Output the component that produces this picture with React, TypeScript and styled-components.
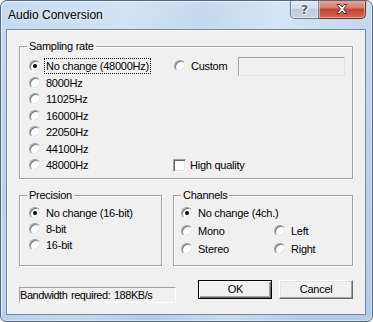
import React from "react";
import styled, { createGlobalStyle } from "styled-components";

const Global = createGlobalStyle`
  html, body { margin: 0; padding: 0; background: #ffffff; }
  body { font-family: "Liberation Sans", Arial, sans-serif; }
  * { box-sizing: border-box; }
`;

const Window = styled.div`
  width: 373px;
  height: 322px;
  border: 1px solid #55687f;
  border-radius: 7px 7px 6px 6px;
  padding: 0 6px 6px 5px;
  display: flex;
  flex-direction: column;
  background:
    linear-gradient(100deg, rgba(255,255,255,0) 0%, rgba(255,255,255,0.25) 30%, rgba(255,255,255,0) 48%, rgba(255,255,255,0.3) 66%, rgba(255,255,255,0) 85%),
    linear-gradient(180deg, #c6daf0 0%, #bcd3ec 40%, #b2cbe8 100%);
  box-shadow: inset 1px 1px 0 rgba(255,255,255,0.6), inset -1px -1px 0 rgba(255,255,255,0.4);
  overflow: hidden;
`;

const TitleBar = styled.div`
  height: 28px;
  display: flex;
  align-items: flex-start;
  justify-content: space-between;
`;

const Title = styled.div`
  height: 28px;
  line-height: 28px;
  padding-left: 2px;
  font-size: 12px;
  color: #000;
  text-shadow: 0 0 6px rgba(255,255,255,0.9);
`;

const Caps = styled.div`
  display: flex;
  margin-top: -1px;
`;

const CapButton = styled.div<{ $kind: "help" | "close" }>`
  height: 19px;
  width: ${(p) => (p.$kind === "help" ? "29px" : "47px")};
  display: flex;
  align-items: center;
  justify-content: center;
  border: 1px solid ${(p) => (p.$kind === "help" ? "#6a7b90" : "#6b2d25")};
  border-left-width: ${(p) => (p.$kind === "help" ? "1px" : "0")};
  border-top: none;
  border-radius: ${(p) => (p.$kind === "help" ? "0 0 0 5px" : "0 0 5px 0")};
  background: ${(p) =>
    p.$kind === "help"
      ? "linear-gradient(180deg, #e4ecf5 0%, #d4dfec 45%, #bccbdc 50%, #c7d5e6 100%)"
      : "linear-gradient(180deg, #e8a99c 0%, #d67b6a 45%, #c4422f 50%, #d16650 100%)"};
  box-shadow: inset 0 0 0 1px rgba(255,255,255,0.45);
`;

const HelpGlyph = styled.span`
  font: bold 13px "DejaVu Sans", sans-serif;
  color: #5a6472;
  text-shadow: 0 0 1px #fff, 0 0 2px #fff, 1px 1px 0 #fff;
  line-height: 1;
`;

const Client = styled.div`
  flex: 1;
  border: 1px solid #6f87a6;
  background: #f0f0f0;
  box-shadow: inset 1px 1px 0 #fbfbfb;
  padding: 16px 12px 0 12px;
  display: flex;
  flex-direction: column;
  font-size: 11px;
  letter-spacing: -0.25px;
  color: #000;
`;

const Group = styled.div<{ $w?: number; $h: number; $mt?: number }>`
  position: relative;
  width: ${(p) => (p.$w ? `${p.$w}px` : "auto")};
  height: ${(p) => p.$h}px;
  margin-top: ${(p) => p.$mt ?? 0}px;
  border: 1px solid #a0a0a0;
  box-shadow: inset 1px 1px 0 #fff, 1px 1px 0 #fff;
`;

const Caption = styled.span`
  position: absolute;
  top: -8px;
  left: 7px;
  padding: 0 2px;
  background: #f0f0f0;
  line-height: 14px;
`;

const SampleGrid = styled.div`
  display: grid;
  grid-template-columns: 145px 1fr;
  grid-auto-rows: 16.5px;
  padding: 11px 0 0 9px;
`;

const Cell = styled.div<{ $col?: number; $row?: number; $span?: number }>`
  grid-column: ${(p) => (p.$col ? `${p.$col} / span ${p.$span ?? 1}` : "auto")};
  grid-row: ${(p) => (p.$row ? p.$row : "auto")};
  display: flex;
  align-items: center;
  white-space: nowrap;
`;

const RowsGrid = styled.div<{ $rowH: number; $pt: number; $pl: number; $cols?: string }>`
  display: grid;
  grid-template-columns: ${(p) => p.$cols ?? "1fr"};
  grid-auto-rows: ${(p) => p.$rowH}px;
  padding: ${(p) => p.$pt}px 0 0 ${(p) => p.$pl}px;
`;

const RadioDot = styled.span<{ $on?: boolean }>`
  position: relative;
  flex: none;
  width: 12px;
  height: 12px;
  margin-right: 5px;
  border-radius: 50%;
  background: #fff;
  border: 1px solid;
  border-color: #a0a0a0 #f4f4f4 #f4f4f4 #a0a0a0;
  box-shadow: inset 1px 1px 0 #777, inset -1px -1px 0 #e3e3e3;
  &::after {
    content: "";
    display: ${(p) => (p.$on ? "block" : "none")};
    position: absolute;
    left: 3px;
    top: 3px;
    width: 4px;
    height: 4px;
    border-radius: 50%;
    background: #000;
  }
`;

const CheckBox = styled.span`
  flex: none;
  width: 13px;
  height: 13px;
  margin: 0 4px 0 -1px;
  background: #fff;
  border: 1px solid;
  border-color: #a0a0a0 #fff #fff #a0a0a0;
  box-shadow: inset 1px 1px 0 #696969, inset -1px -1px 0 #e3e3e3;
`;

const Label = styled.span<{ $focus?: boolean }>`
  line-height: 14px;
  padding: 0 1px;
  margin-left: -1px;
  outline: ${(p) => (p.$focus ? "1px dotted #000" : "none")};
  outline-offset: 0;
`;

const Edit = styled.span`
  width: 107px;
  height: 19px;
  margin-left: auto;
  margin-right: 7px;
  margin-top: 1px;
  background: #f0f0f0;
  border: 1px solid;
  border-color: #a0a0a0 #e3e3e3 #e3e3e3 #a0a0a0;
  box-shadow: inset 1px 1px 0 #f8f8f8;
`;

const Pair = styled.div`
  display: flex;
  gap: 11px;
  margin-top: 16px;
`;

const Footer = styled.div`
  display: flex;
  align-items: flex-start;
  margin-top: 14px;
`;

const Status = styled.div`
  width: 158px;
  height: 16px;
  margin-top: 7px;
  border: 1px solid;
  border-color: #a0a0a0 #fff #fff #a0a0a0;
  line-height: 14px;
  padding-left: 0;
  letter-spacing: -0.45px;
  word-spacing: 1px;
  white-space: nowrap;
`;

const Button = styled.div<{ $default?: boolean }>`
  width: 74px;
  height: 19px;
  display: flex;
  align-items: center;
  justify-content: center;
  margin-left: ${(p) => (p.$default ? "22px" : "7px")};
  background: #f0f0f0;
  border: 1px solid;
  border-color: ${(p) => (p.$default ? "#000" : "#fff #696969 #696969 #fff")};
  box-shadow: ${(p) =>
    p.$default
      ? "inset 1px 1px 0 #fff, inset -1px -1px 0 #696969, inset -2px -2px 0 #a0a0a0"
      : "inset -1px -1px 0 #a0a0a0, inset 1px 1px 0 #e3e3e3"};
  padding-bottom: 1px;
`;

const Radio = ({ label, on, focus }: { label: string; on?: boolean; focus?: boolean }) => (
  <>
    <RadioDot $on={on} />
    <Label $focus={focus}>{label}</Label>
  </>
);

const rates = ["8000Hz", "11025Hz", "16000Hz", "22050Hz", "44100Hz", "48000Hz"];

export default function App() {
  return (
    <>
      <Global />
      <Window>
        <TitleBar>
          <Title>Audio Conversion</Title>
          <Caps>
            <CapButton $kind="help">
              <HelpGlyph>?</HelpGlyph>
            </CapButton>
            <CapButton $kind="close">
              <svg width="16" height="12" viewBox="0 0 16 12">
                <path
                  d="M3 1.5 L6 1.5 L8 4 L10 1.5 L13 1.5 L9.6 6 L13 10.5 L10 10.5 L8 8 L6 10.5 L3 10.5 L6.4 6 Z"
                  fill="#fff"
                  stroke="#5a1f18"
                  strokeWidth="0.9"
                  strokeLinejoin="round"
                />
              </svg>
            </CapButton>
          </Caps>
        </TitleBar>
        <Client>
          <Group $h={133}>
            <Caption>Sampling rate</Caption>
            <SampleGrid>
              <Cell $col={1} $row={1}>
                <Radio label="No change (48000Hz)" on focus />
              </Cell>
              {rates.map((r, i) => (
                <Cell key={r} $col={1} $row={i + 2}>
                  <Radio label={r} />
                </Cell>
              ))}
              <Cell $col={2} $row={1}>
                <Radio label="Custom" />
                <Edit />
              </Cell>
              <Cell $col={2} $row={7}>
                <CheckBox />
                <Label>High quality</Label>
              </Cell>
            </SampleGrid>
          </Group>
          <Pair>
            <Group $w={143} $h={71}>
              <Caption>Precision</Caption>
              <RowsGrid $rowH={16} $pt={9} $pl={9}>
                <Cell>
                  <Radio label="No change (16-bit)" on />
                </Cell>
                <Cell>
                  <Radio label="8-bit" />
                </Cell>
                <Cell>
                  <Radio label="16-bit" />
                </Cell>
              </RowsGrid>
            </Group>
            <Group $w={180} $h={71}>
              <Caption>Channels</Caption>
              <RowsGrid $rowH={18} $pt={8} $pl={7} $cols="93px 1fr">
                <Cell $col={1} $span={2}>
                  <Radio label="No change (4ch.)" on />
                </Cell>
                <Cell>
                  <Radio label="Mono" />
                </Cell>
                <Cell>
                  <Radio label="Left" />
                </Cell>
                <Cell>
                  <Radio label="Stereo" />
                </Cell>
                <Cell>
                  <Radio label="Right" />
                </Cell>
              </RowsGrid>
            </Group>
          </Pair>
          <Footer>
            <Status>Bandwidth required: 188KB/s</Status>
            <Button $default>OK</Button>
            <Button>Cancel</Button>
          </Footer>
        </Client>
      </Window>
    </>
  );
}
